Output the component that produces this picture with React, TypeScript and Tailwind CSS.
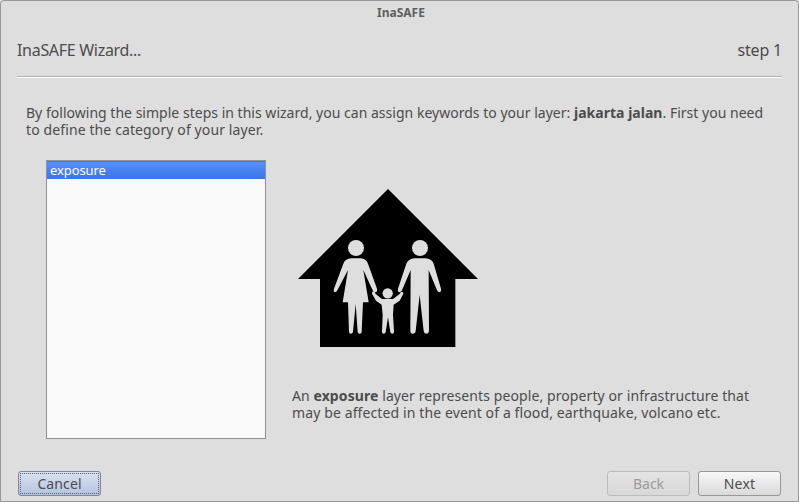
import type { ReactNode } from 'react';

function Line({ className, children }: { className: string; children: ReactNode }) {
  return <div className={`whitespace-nowrap ${className}`}>{children}</div>;
}

function HouseIcon() {
  return (
    <svg viewBox="0 0 600 525" className="block h-[175px] w-[200px]" aria-hidden="true">
      <path fill="#000" d="M294 27 564 297H496V501H90V297H24Z" />
      <g fill="#dedede">
        <circle cx="198" cy="204" r="24" />
        <path d="M184 235H212Q228 236 234 251L261 326Q263 335 256 337Q251 338 248 331L220 270L236 367H219L215 455Q215 461 209 461Q204 461 203 455L197 372L189 455Q188 461 182 461Q177 461 177 455L174 367H158L174 270L142 331Q139 338 133 336Q130 333 132 326L160 251Q166 236 184 235Z" />
        <circle cx="390" cy="204" r="24" />
        <path d="M374 235H406Q425 236 431 251L453 326Q455 334 450 336Q444 338 441 331L416 270L417 452Q416 461 409 461Q402 461 401 453L389 345L377 453Q376 461 368 461Q361 461 361 452L362 270L336 331Q333 338 326 336Q322 334 324 326L349 251Q356 236 374 235Z" />
        <circle cx="293" cy="340" r="15.500" />
        <path d="M250 334Q245 335 246 341L258 362L275 374L278 404L276 455Q276 461 281 461Q286 461 287 456L294 412L301 456Q302 461 307 461Q312 461 312 455L309 404L311 374L329 362L340 341Q341 335 335 335Q332 335 329 342L309 357H276L257 342Q255 336 250 334Z" />
      </g>
    </svg>
  );
}

export default function App() {
  return (
    <div className="h-[502px] w-[799px] bg-[#dedede]">
      <div className="flex h-full flex-col rounded-t-[4px] border border-[#989898] font-['Noto_Sans',sans-serif] text-[14px] leading-[17px] text-[#4c4c4c]">
        <div className="flex h-[23px] items-center justify-center pl-[3px] text-[12px] font-bold text-[#5f5f5f]">
          <span>InaSAFE</span>
        </div>
        <header className="mx-4 flex h-[53px] items-center justify-between border-b border-[#b2b2b2] text-[16px] shadow-[0_1px_0_#fff]">
          <span className="tracking-[-0.3px]">InaSAFE Wizard...</span>
          <span className="tracking-[-0.2px]">step 1</span>
        </header>

        <main className="flex flex-1 flex-col">
          <div className="ml-[25px] mt-[27px]">
            <Line className="tracking-[0.018px]">
              By following the simple steps in this wizard, you can assign keywords to your layer: <b>jakarta jalan</b>. First you need
            </Line>
            <Line className="tracking-[0.115px]">to define the category of your layer.</Line>
          </div>
          <div className="mt-[22px] flex">
            <div className="ml-[45px] h-[279px] w-[220px] border border-[#919191] bg-[#f9f9f9]">
              <div className="flex h-[18px] items-center border-t border-[#3f77e4] bg-linear-to-b from-[#5590fa] to-[#3975e6] pl-[3px] text-[13px] text-white">
                <span className="tracking-[-0.1px]">exposure</span>
              </div>
            </div>
            <div className="ml-[24px] pt-[20px]">
              <HouseIcon />
              <div className="ml-[2px] mt-[32px]">
                <Line className="tracking-[0.092px]">
                  An <b>exposure</b> layer represents people, property or infrastructure that
                </Line>
                <Line className="tracking-[0.115px]">may be affected in the event of a flood, earthquake, volcano etc.</Line>
              </div>
            </div>
          </div>
        </main>

        <footer className="mb-[5px] ml-[17px] mr-[17px] flex gap-2">
          <button className="mr-auto h-[25px] w-[83px] rounded-[3px] border border-[#85878f] bg-linear-to-b from-[#dae2f1] to-[#b4c3df] p-px">
            <span className="flex h-full items-center justify-center border border-dotted border-[#536078] tracking-[0.1px]">Cancel</span>
          </button>
          <button className="h-[25px] w-[83px] rounded-[3px] border border-[#bcbcbc] bg-linear-to-b from-[#e4e4e4] to-[#d8d8d8] text-[#9b9b9b]">Back</button>
          <button className="h-[25px] w-[83px] rounded-[3px] border border-[#989898] bg-linear-to-b from-[#f8f8f8] to-[#dadada] tracking-[0.2px]">Next</button>
        </footer>
      </div>
    </div>
  );
}
